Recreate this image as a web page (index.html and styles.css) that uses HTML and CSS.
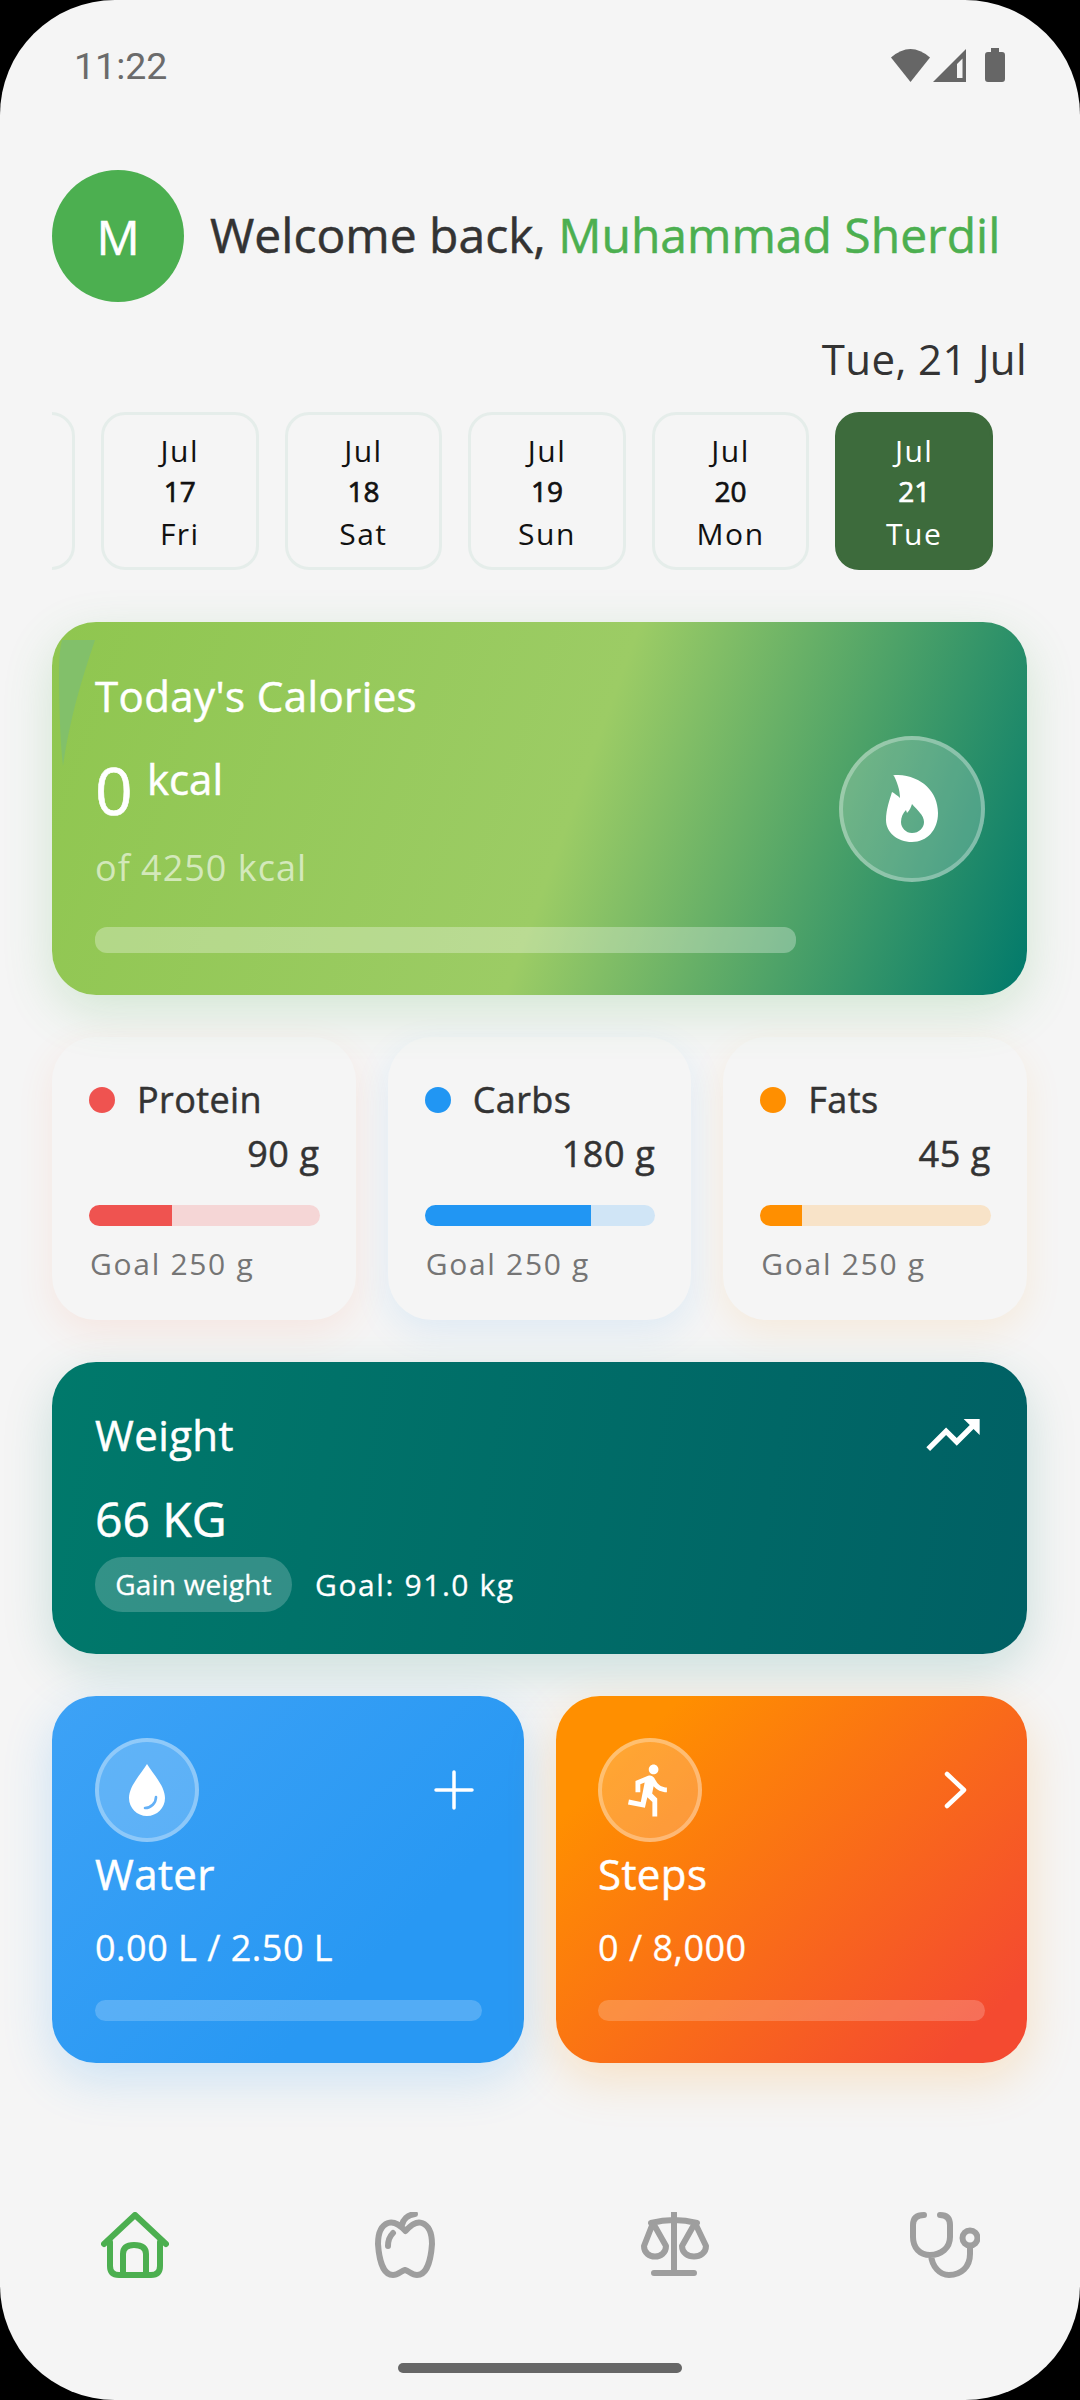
FILE: index.html
```html
<!DOCTYPE html>
<html lang="en">

<head>
    <meta charset="UTF-8">
    <meta name="viewport" content="width=device-width, initial-scale=1.0">
    <title>Dashboard</title>
    <link rel="stylesheet" href="styles.css">
</head>

<body>
    <div class="screen">
        <div class="status-bar">
            <span class="status-time">11:22</span>
            <div class="status-icons">
                <svg class="icon-wifi" width="39" height="33" viewBox="0 0 39 33">
                    <path d="M0 8.5Q19.5 -8.5 39 8.5L19.5 33Z" />
                </svg>
                <svg class="icon-signal" width="33" height="33" viewBox="0 0 33 33">
                    <path fill-rule="evenodd" d="M0 33L33 0V33ZM24 15V29H29.5V9.5Z" />
                </svg>
                <svg class="icon-battery" width="20" height="34" viewBox="0 0 20 34">
                    <path d="M6 0H14V4H17Q20 4 20 7V31Q20 34 17 34H3Q0 34 0 31V7Q0 4 3 4H6Z" />
                </svg>
            </div>
        </div>

        <div class="content">
            <div class="welcome">
                <div class="avatar">M</div>
                <div class="welcome-text">Welcome back, <span class="user-name">Muhammad Sherdil</span></div>
            </div>

            <div class="today">Tue, 21 Jul</div>

            <div class="day-strip">
                <div class="day-chip"></div>
                <div class="day-chip">
                    <span class="day-month">Jul</span>
                    <span class="day-num">17</span>
                    <span class="day-name">Fri</span>
                </div>
                <div class="day-chip">
                    <span class="day-month">Jul</span>
                    <span class="day-num">18</span>
                    <span class="day-name">Sat</span>
                </div>
                <div class="day-chip">
                    <span class="day-month">Jul</span>
                    <span class="day-num">19</span>
                    <span class="day-name">Sun</span>
                </div>
                <div class="day-chip">
                    <span class="day-month">Jul</span>
                    <span class="day-num">20</span>
                    <span class="day-name">Mon</span>
                </div>
                <div class="day-chip active">
                    <span class="day-month">Jul</span>
                    <span class="day-num">21</span>
                    <span class="day-name">Tue</span>
                </div>
            </div>

            <div class="calories-card">
                <svg class="calories-leaf" width="36" height="126" viewBox="0 0 36 126">
                    <path d="M3 0H36C28 24 12 70 4 126C1 100 0 60 0 30Q0 12 3 0Z" />
                </svg>
                <div class="calories-main">
                    <div class="card-title">Today's Calories</div>
                    <div class="calories-value"><span class="calories-num">0</span> <span class="calories-unit">kcal</span></div>
                    <div class="calories-goal">of 4250 kcal</div>
                    <div class="calories-bar"></div>
                </div>
                <div class="round-icon calories-icon">
                    <svg width="52" height="67" viewBox="0 0 52 67">
                        <path fill="#fff" fill-rule="evenodd"
                            d="M8 1C6 0 9 0 12 0C36 1 52 17 52 38C52 55 41 67 26 67C11 67 0 57 0 45C0 34 4 24 6 17C8 18 12 21 14 23C14 15 11 7 8 1ZM26 29C25 32 24 35 21 38L20 35C17 38 15 42 15 47C15 53 20 58 26 58C33 58 38 53 38 47C38 40 31 35 26 29Z" />
                    </svg>
                </div>
            </div>

            <div class="macros">
                <div class="macro-card protein">
                    <div class="macro-head"><span class="macro-dot"></span>Protein</div>
                    <div class="macro-value">90 g</div>
                    <div class="macro-bar"><div class="macro-fill" style="width: 36%"></div></div>
                    <div class="macro-goal">Goal 250 g</div>
                </div>
                <div class="macro-card carbs">
                    <div class="macro-head"><span class="macro-dot"></span>Carbs</div>
                    <div class="macro-value">180 g</div>
                    <div class="macro-bar"><div class="macro-fill" style="width: 72%"></div></div>
                    <div class="macro-goal">Goal 250 g</div>
                </div>
                <div class="macro-card fats">
                    <div class="macro-head"><span class="macro-dot"></span>Fats</div>
                    <div class="macro-value">45 g</div>
                    <div class="macro-bar"><div class="macro-fill" style="width: 18%"></div></div>
                    <div class="macro-goal">Goal 250 g</div>
                </div>
            </div>

            <div class="weight-card">
                <div class="weight-head">
                    <div class="card-title">Weight</div>
                    <svg width="64" height="64" viewBox="0 0 24 24">
                        <path fill="#fff" d="M16 6l2.29 2.29-4.88 4.88-4-4L2 16.59 3.41 18l6-6 4 4 6.3-6.29L22 12V6z" />
                    </svg>
                </div>
                <div class="weight-value">66 KG</div>
                <div class="weight-foot">
                    <span class="weight-pill">Gain weight</span>
                    <span class="weight-goal">Goal: 91.0 kg</span>
                </div>
            </div>

            <div class="mini-cards">
                <div class="mini-card water">
                    <div class="mini-head">
                        <div class="round-icon mini-icon">
                            <svg width="36" height="52" viewBox="0 0 36 52">
                                <path fill="#fff" d="M18 0C24 10 36 22 36 34C36 44 28 52 18 52C8 52 0 44 0 34C0 22 12 10 18 0Z" />
                                <path fill="none" stroke="#64b0f6" stroke-width="2.6" stroke-linecap="round" d="M27 33C27 39 22 44 16 44" />
                            </svg>
                        </div>
                        <svg class="mini-plus" width="40" height="40" viewBox="0 0 40 40">
                            <path fill="none" stroke="#fff" stroke-width="3.5" stroke-linecap="round" d="M20 2V38M2 20H38" />
                        </svg>
                    </div>
                    <div class="card-title">Water</div>
                    <div class="mini-value">0.00 L / 2.50 L</div>
                    <div class="mini-bar"></div>
                </div>
                <div class="mini-card steps">
                    <div class="mini-head">
                        <div class="round-icon mini-icon">
                            <svg width="58" height="58" viewBox="0 0 24 24">
                                <path fill="#fff" d="M13.49 5.48c1.1 0 2-.9 2-2s-.9-2-2-2-2 .9-2 2 .9 2 2 2zm-3.6 13.9l1-4.4 2.1 2v6h2v-7.5l-2.1-2 .6-3c1.3 1.5 3.3 2.5 5.5 2.5v-2c-1.9 0-3.5-1-4.3-2.4l-1-1.6c-.4-.6-1-1-1.7-1-.3 0-.5.1-.8.1l-5.2 2.2v4.7h2v-3.4l1.8-.7-1.6 8.1-4.9-1-.4 2 7 1.4z" />
                            </svg>
                        </div>
                        <svg class="mini-chevron" width="24" height="38" viewBox="0 0 24 38">
                            <path fill="none" stroke="#fff" stroke-width="4.5" stroke-linecap="round" stroke-linejoin="round" d="M3 3L20 19L3 35" />
                        </svg>
                    </div>
                    <div class="card-title">Steps</div>
                    <div class="mini-value">0 / 8,000</div>
                    <div class="mini-bar"></div>
                </div>
            </div>
        </div>

        <div class="bottom-nav">
            <svg class="nav-home" width="68" height="66" viewBox="0 0 68 66">
                <path d="M3 32L34 3L65 32M9 30V54Q9 63 18 63H50Q59 63 59 54V30M22 63V42Q22 33 33 33Q45 33 45 42V63" />
            </svg>
            <svg width="60" height="66" viewBox="0 0 60 66">
                <path d="M30.5 19C25 13 19 9 13 11C5 14 3 23 3 32C4 47 8 63 18 63C23 63 26 59 30 58C34 59 37 63 42 63C52 63 56 47 57 32C57 23 55 14 47 11C41 9 36 13 30.5 19ZM27 13C28 8 32 3 40 2M18 21C15 24 13 29 13 34" />
            </svg>
            <svg width="68" height="64" viewBox="0 0 68 64">
                <path d="M33 1V60M13 61H53M10 11Q33 5 56 11M12 11L3 34C3 48 25 48 25 34ZM54 11L41 34C41 48 65 48 65 34Z" />
            </svg>
            <svg width="70" height="66" viewBox="0 0 70 66">
                <path d="M14 3Q3 3 3 13V25C3 36 10 43 20 43C31 43 40 36 40 25V13Q40 3 30 3M21 43C22 55 30 63 39 63C51 63 60 55 60 42V35" />
                <circle cx="60" cy="26" r="7.5" />
            </svg>
        </div>

        <div class="home-indicator"></div>
    </div>
</body>

</html>
```

FILE: styles.css
```css
body {
    margin: 0;
    background-color: #000;
    font-family: "Open Sans", "Noto Sans", sans-serif;
    color: #333;
}

.screen {
    width: 1080px;
    height: 2400px;
    background-color: #f5f5f5;
    border-radius: 115px;
    overflow: hidden;
}

.status-bar {
    height: 130px;
    padding: 0 75px 0 74px;
    box-sizing: border-box;
    display: flex;
    justify-content: space-between;
    align-items: center;
    color: #6b6b6b;
}

.status-time {
    padding-top: 2px;
    font-family: Roboto, sans-serif;
    font-size: 37.5px;
}

.status-icons {
    display: flex;
    align-items: flex-end;
    fill: #666;
}

.icon-signal {
    margin-left: 3px;
}

.icon-battery {
    margin-left: 19px;
}

.content {
    padding: 0 53px 0 52px;
}

.welcome {
    margin-top: 40px;
    display: flex;
    align-items: center;
    gap: 26px;
}

.avatar {
    width: 132px;
    height: 132px;
    border-radius: 50%;
    background-color: #4caf50;
    color: #fff;
    font-size: 48px;
    -webkit-text-stroke: 0.5px #fff;
    display: flex;
    align-items: center;
    justify-content: center;
}

.welcome-text {
    padding-bottom: 3px;
    font-size: 48px;
    font-weight: 500;
    -webkit-text-stroke: 0.5px;
    white-space: nowrap;
}

.user-name {
    color: #4caf50;
}

.today {
    margin-top: 28px;
    font-size: 42px;
    line-height: 58px;
    letter-spacing: 0.4px;
    text-align: right;
}

.day-strip {
    margin-top: 24px;
    display: flex;
    gap: 26px;
    overflow: hidden;
}

.day-chip {
    flex: none;
    width: 157.6px;
    height: 158px;
    box-sizing: border-box;
    padding-top: 16px;
    border: 3px solid #e5edea;
    border-radius: 24px;
    display: flex;
    flex-direction: column;
    align-items: center;
    color: #111;
    font-size: 30px;
    letter-spacing: 1.5px;
}

.day-chip:first-child {
    margin-left: -134.6px;
}

.day-chip.active {
    background-color: #3d6b3c;
    border-color: #3d6b3c;
    color: #fff;
}

.day-month {
    line-height: 40px;
}

.day-num {
    font-size: 28px;
    font-weight: 500;
    -webkit-text-stroke: 0.7px;
    line-height: 40px;
    letter-spacing: 0;
}

.day-name {
    margin-top: 1px;
    line-height: 44px;
}

.card-title {
    font-size: 42px;
    font-weight: 500;
    -webkit-text-stroke: 0.5px #fff;
    line-height: 58px;
    letter-spacing: 0.4px;
    color: #fff;
}

.round-icon {
    flex: none;
    box-sizing: border-box;
    border: 4px solid rgba(255, 255, 255, 0.3);
    border-radius: 50%;
    background-color: rgba(255, 255, 255, 0.2);
    display: flex;
    align-items: center;
    justify-content: center;
}

.calories-card {
    position: relative;
    margin-top: 52px;
    height: 373px;
    box-sizing: border-box;
    padding: 45px 42px 0 43px;
    border-radius: 44px;
    display: flex;
    gap: 43px;
    background: linear-gradient(110deg, #8fc64f 0%, #9ccc65 53%, #00796b 100%);
    box-shadow: 0 16px 50px rgba(76, 175, 80, 0.2);
}

.calories-leaf {
    position: absolute;
    left: 7px;
    top: 18px;
    fill: #82c06a;
}

.calories-main {
    flex: 1;
    position: relative;
}

.calories-value {
    margin-top: 24px;
    height: 80px;
    line-height: 80px;
    color: #fff;
}

.calories-num {
    font-size: 66px;
    font-weight: 500;
    -webkit-text-stroke: 0.6px #fff;
}

.calories-unit {
    margin-left: 10px;
    font-size: 42px;
    font-weight: 500;
    -webkit-text-stroke: 0.5px #fff;
    line-height: 1;
    vertical-align: 20px;
}

.calories-goal {
    margin-top: 17px;
    font-size: 36px;
    line-height: 44px;
    letter-spacing: 1px;
    color: rgba(255, 255, 255, 0.6);
}

.calories-bar {
    margin-top: 37px;
    height: 26px;
    border-radius: 12px;
    background-color: rgba(255, 255, 255, 0.3);
}

.calories-icon {
    width: 146px;
    height: 146px;
    align-self: center;
    margin-top: -45px;
}

.macros {
    margin-top: 42px;
    display: grid;
    grid-template-columns: repeat(3, 1fr);
    gap: 32px;
}

.macro-card {
    height: 283px;
    box-sizing: border-box;
    padding: 39px 36px 0 37px;
    border-radius: 44px;
    background-color: #f5f5f5;
}

.macro-head {
    display: flex;
    align-items: center;
    gap: 22px;
    font-size: 36px;
    font-weight: 500;
    -webkit-text-stroke: 0.5px;
    line-height: 48px;
    letter-spacing: 0.4px;
}

.macro-dot {
    width: 26px;
    height: 26px;
    border-radius: 50%;
    background-color: var(--macro);
}

.macro-value {
    margin-top: 6px;
    font-size: 36px;
    font-weight: 500;
    -webkit-text-stroke: 0.5px;
    line-height: 48px;
    letter-spacing: 0.6px;
    text-align: right;
}

.macro-bar {
    margin-top: 27px;
    height: 21px;
    border-radius: 11px;
    overflow: hidden;
    background-color: var(--macro-light);
}

.macro-fill {
    height: 100%;
    background-color: var(--macro);
}

.macro-goal {
    margin: 16px 0 0 1px;
    font-size: 30px;
    line-height: 44px;
    letter-spacing: 1.7px;
    color: #757575;
}

.protein {
    --macro: #ef5350;
    --macro-light: #f5d6d6;
    box-shadow: 0 12px 36px rgba(255, 110, 60, 0.1);
}

.carbs {
    --macro: #2196f3;
    --macro-light: #d0e5f6;
    box-shadow: 0 12px 36px rgba(33, 150, 243, 0.1);
}

.fats {
    --macro: #ff8f00;
    --macro-light: #f8e3c8;
    box-shadow: 0 12px 36px rgba(255, 143, 0, 0.1);
}

.weight-card {
    margin-top: 42px;
    height: 292px;
    box-sizing: border-box;
    padding: 44px 42px 0 43px;
    border-radius: 44px;
    background: linear-gradient(100deg, #00796b, #006064);
    box-shadow: 0 16px 50px rgba(0, 121, 107, 0.18);
    color: #fff;
}

.weight-head {
    height: 58px;
    display: flex;
    justify-content: space-between;
    align-items: center;
}

.weight-value {
    margin-top: 23px;
    font-size: 48px;
    font-weight: 500;
    -webkit-text-stroke: 0.5px #fff;
    line-height: 64px;
}

.weight-foot {
    margin-top: 6px;
    display: flex;
    align-items: center;
    gap: 23px;
}

.weight-pill {
    width: 197px;
    height: 55px;
    border-radius: 28px;
    background-color: rgba(255, 255, 255, 0.2);
    font-size: 28px;
    font-weight: 500;
    -webkit-text-stroke: 0.3px #fff;
    letter-spacing: 0.2px;
    line-height: 55px;
    text-align: center;
}

.weight-goal {
    font-size: 30px;
    font-weight: 500;
    -webkit-text-stroke: 0.3px #fff;
    letter-spacing: 1.6px;
}

.mini-cards {
    margin-top: 42px;
    display: grid;
    grid-template-columns: 472px 471px;
    gap: 32px;
}

.mini-card {
    height: 367px;
    box-sizing: border-box;
    padding: 42px 42px 0 43px;
    border-radius: 44px;
    color: #fff;
}

.water {
    background: linear-gradient(135deg, #3da2f6 0%, #2898f3 70%);
    box-shadow: 0 16px 50px rgba(33, 150, 243, 0.2);
}

.steps {
    padding-left: 42px;
    background: linear-gradient(135deg, #ff8f00 15%, #f44a30 90%);
    box-shadow: 0 16px 50px rgba(255, 143, 0, 0.2);
}

.mini-head {
    display: flex;
    justify-content: space-between;
    align-items: center;
}

.mini-icon {
    width: 104px;
    height: 104px;
}

.mini-plus {
    margin-right: 8px;
}

.mini-chevron {
    margin-right: 17px;
}

.mini-card .card-title {
    margin-top: 3px;
}

.mini-value {
    margin-top: 21px;
    font-size: 36px;
    font-weight: 500;
    -webkit-text-stroke: 0.3px #fff;
    line-height: 48px;
    letter-spacing: 0.5px;
}

.mini-bar {
    margin-top: 28px;
    height: 21px;
    border-radius: 11px;
    background-color: rgba(255, 255, 255, 0.2);
}

.bottom-nav {
    margin-top: 149px;
    display: grid;
    grid-template-columns: repeat(4, 1fr);
    justify-items: center;
    align-items: start;
    fill: none;
    stroke: #9e9e9e;
    stroke-width: 6;
    stroke-linecap: round;
    stroke-linejoin: round;
}

.nav-home {
    stroke: #4caf50;
}

.home-indicator {
    width: 284px;
    height: 10px;
    margin: 85px auto 0;
    border-radius: 5px;
    background-color: #666;
}
```
